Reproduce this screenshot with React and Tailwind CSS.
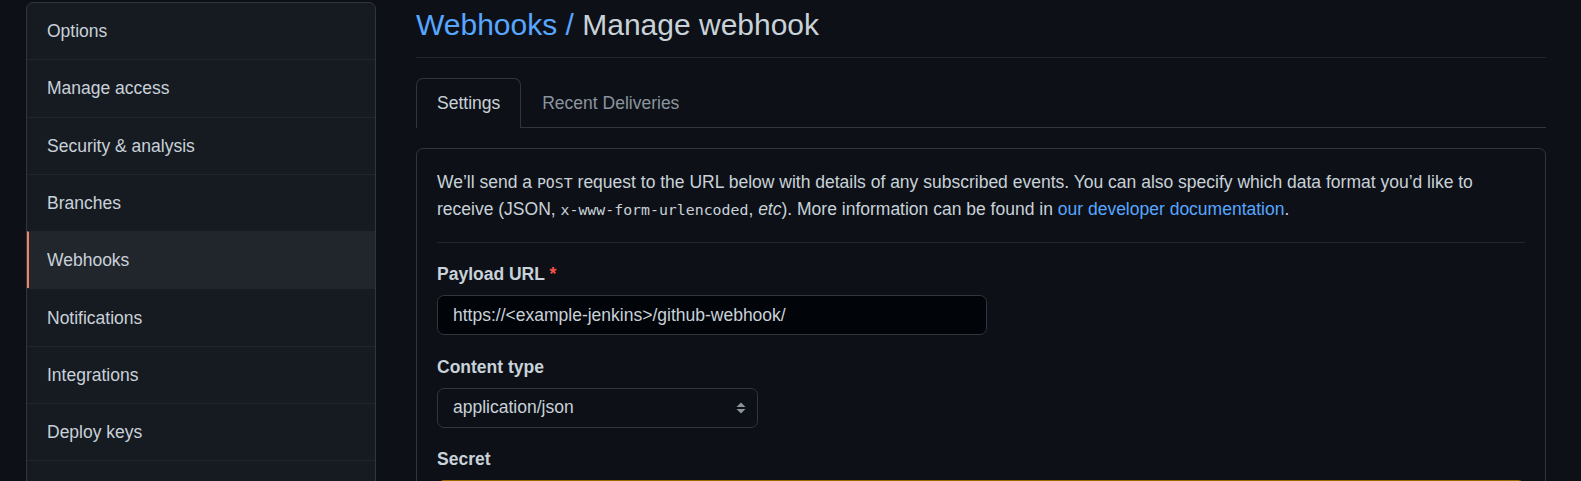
import React from "react";

const items = [
  "Options",
  "Manage access",
  "Security & analysis",
  "Branches",
  "Webhooks",
  "Notifications",
  "Integrations",
  "Deploy keys",
  "Secrets",
];

const mono = { fontFamily: '"DejaVu Sans Mono", "Liberation Mono", monospace' };

export default function App() {
  return (
    <div
      className="w-full h-[481px] overflow-hidden bg-[#0d1117] text-[#c9d1d9] text-[17.5px] flex items-start pl-[26px]"
      style={{ fontFamily: '"Liberation Sans", Arial, sans-serif' }}
    >
      {/* Sidebar */}
      <nav className="mt-[2px] w-[350px] shrink-0 border border-[#30363d] rounded-[7px] bg-[#161b22] overflow-hidden">
        {items.map((it, i) => {
          const active = it === "Webhooks";
          return (
            <div
              key={it}
              className={
                "h-[56.3px] flex items-center box-content " +
                (i > 0 ? "border-t border-[#21262d] " : "") +
                (active
                  ? "bg-[#21262d] border-l-2 border-l-[#f78166] pl-[18px]"
                  : "pl-[20px]")
              }
            >
              {it}
            </div>
          );
        })}
      </nav>

      {/* Main */}
      <main className="ml-[40px] w-[1130px] shrink-0 pt-[2px]">
        <div className="border-b border-[#21262d] pb-[10px]">
          <h2 className="text-[30px] leading-[45px] font-normal">
            <span className="text-[#58a6ff]">Webhooks /</span>{" "}
            <span className="text-[#c9d1d9]">Manage webhook</span>
          </h2>
        </div>

        {/* Tabs */}
        <div className="mt-[20px] flex border-b border-[#30363d]">
          <div className="h-[50px] -mb-px flex items-center px-[20px] border border-b-0 border-[#30363d] rounded-t-[7px] bg-[#0d1117] text-[#c9d1d9]">
            Settings
          </div>
          <div className="h-[50px] -mb-px flex items-center px-[20px] border border-transparent text-[#8b949e]">
            Recent Deliveries
          </div>
        </div>

        {/* Box */}
        <div className="mt-[20px] border border-[#30363d] rounded-[7px] px-[20px] pt-[20px] pb-[40px]">
          <p className="leading-[26.25px] pb-[18px] border-b border-[#21262d]">
            We’ll send a{" "}
            <span style={mono} className="text-[14.875px]">
              POST
            </span>{" "}
            request to the URL below with details of any subscribed events. You can also specify
            which data format you’d like to receive (JSON,{" "}
            <span style={mono} className="text-[14.875px]">
              x-www-form-urlencoded
            </span>
            , <em>etc</em>). More information can be found in{" "}
            <a className="text-[#58a6ff]">our developer documentation</a>.
          </p>

          <div className="mt-[18.75px]">
            <div className="font-bold leading-[26.25px] mb-[7.5px]">
              Payload URL <span className="text-[#f85149]">*</span>
            </div>
            <div className="w-[550px] h-[40px] flex items-center px-[15px] bg-[#010409] border border-[#30363d] rounded-[7px]">
              https://&lt;example-jenkins&gt;/github-webhook/
            </div>
          </div>

          <div className="mt-[18.75px]">
            <div className="font-bold leading-[26.25px] mb-[7.5px]">Content type</div>
            <div className="w-[321px] h-[40px] flex items-center justify-between pl-[15px] pr-[10px] bg-[#0d1117] border border-[#30363d] rounded-[7px]">
              <span>application/json</span>
              <svg width="12" height="16" viewBox="0 0 12 16">
                <path d="M6 2.5 L10.5 7 L1.5 7 Z" fill="#8b949e" />
                <path d="M6 13.5 L10.5 9 L1.5 9 Z" fill="#8b949e" />
              </svg>
            </div>
          </div>

          <div className="mt-[18.75px]">
            <div className="font-bold leading-[26.25px] mb-[7.5px]">Secret</div>
            <div className="w-full h-[40px] bg-[#010409] border border-[#9e6a03] rounded-[7px]" />
          </div>
        </div>
      </main>
    </div>
  );
}
